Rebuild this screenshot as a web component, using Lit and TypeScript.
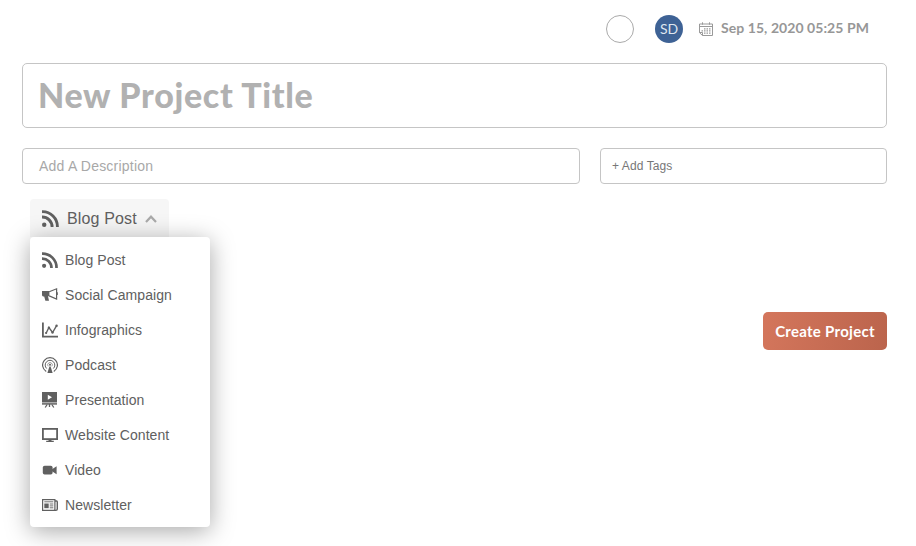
import { LitElement, html, css, svg } from "lit";
import { customElement } from "lit/decorators.js";

const icons: Record<string, unknown> = {
  blog: svg`<g fill="none" stroke="currentColor" stroke-width="2.7"><path d="M0 1.6A14 14 0 0 1 14.5 16"/><path d="M0 6.6A9.3 9.3 0 0 1 9.5 16"/></g><circle cx="2.1" cy="13.8" r="2.1" fill="currentColor"/>`,
  social: svg`<path d="M0 4h7.4v5.2H6l1 4.6H3.4L2.2 9.6H1.2Q0 9.2 0 8z" fill="currentColor"/><path d="M7.2 4.8 14.6 1.8V12L7.2 8.9" fill="none" stroke="currentColor" stroke-width="1.2"/><path d="M14.2 5.3h1.6v2.8h-1.6z" fill="currentColor"/>`,
  info: svg`<path d="M.9.5v14.1H16" fill="none" stroke="currentColor" stroke-width="1.8"/><path d="m4.1 11.2 2.8-5.7 3.7 5 4-6.9" fill="none" stroke="currentColor" stroke-width="1.4"/><g fill="currentColor"><circle cx="4.1" cy="11" r="1.1"/><circle cx="6.9" cy="5.8" r="1.2"/><circle cx="10.5" cy="10.4" r="1.2"/><circle cx="14.6" cy="3.8" r="1.2"/></g>`,
  podcast: svg`<g fill="none" stroke="currentColor"><path d="M4.2 14.4a7.4 7.4 0 1 1 7.6 0" stroke-width="1.2"/><path d="M4.6 11.5a4.8 4.8 0 1 1 6.8 0" stroke-width="1"/><path d="M6.2 9.3a2.3 2.3 0 1 1 3.6 0" stroke-width=".6"/></g><circle cx="8" cy="7.8" r="1" fill="currentColor"/><path d="M7.4 9.6h1.2l2 6.4H5.4z" fill="currentColor"/>`,
  slides: svg`<path fill-rule="evenodd" d="M0 0h15v10.6H0zM5.8 2.7v5L10 5.2z" fill="currentColor"/><path d="M0 11.9h15" fill="none" stroke="currentColor" stroke-width="1.5"/><path d="M7.5 12v3M5.2 12.5l-2 3M9.8 12.5l2 3" fill="none" stroke="currentColor" stroke-width="1.3"/>`,
  web: svg`<rect x=".9" y="1.9" width="14.2" height="10.2" fill="none" stroke="currentColor" stroke-width="1.8"/><path d="M6.5 12.5h3v1.3h2.3v1.2H4.2v-1.2h2.3z" fill="currentColor"/>`,
  video: svg`<rect x=".8" y="3.7" width="9.8" height="8.8" rx="1.8" fill="currentColor"/><path d="m10 7.2 4.6-3v8L10 9.3z" fill="currentColor"/>`,
  news: svg`<path d="M.6 2.6h12.3v10.8H.6z" fill="none" stroke="currentColor" stroke-width="1.2"/><path d="M13 4h1.6q.7 0 .7 1v7q0 1.4-1.4 1.4H12" fill="none" stroke="currentColor" stroke-width="1.4"/><path d="M2.3 6.5h4.4v4.7H2.3z" fill="currentColor"/><path d="M2.3 4.8h9M7.7 7h3.6M7.7 8.9h3.6M7.7 10.8h3.6" stroke="currentColor" stroke-width=".9"/>`,
};

const icon = (name: string, size = 16) =>
  html`<svg width=${size} height=${size} viewBox="0 0 16 16" aria-hidden="true">${icons[name]}</svg>`;

const types = [
  ["blog", "Blog Post"],
  ["social", "Social Campaign"],
  ["info", "Infographics"],
  ["podcast", "Podcast"],
  ["slides", "Presentation"],
  ["web", "Website Content"],
  ["video", "Video"],
  ["news", "Newsletter"],
];

@customElement("app-root")
export class AppRoot extends LitElement {
  static styles = css`
    :host {
      display: block;
      box-sizing: border-box;
      height: 546px;
      overflow: hidden;
      padding: 0 29px 0 22px;
      background: #fff;
      color: #606060;
      font-family: "Liberation Sans", Arial, sans-serif;
    }
    * { box-sizing: border-box; }
    svg { display: block; flex: none; }
    .top {
      display: flex;
      justify-content: flex-end;
      align-items: center;
      height: 63px;
      padding: 0 18px 6px 0;
    }
    .circle {
      width: 28px;
      height: 28px;
      border-radius: 50%;
      border: 1px solid #aaa;
      margin-right: 21px;
    }
    .avatar {
      display: flex;
      align-items: center;
      justify-content: center;
      width: 28px;
      height: 28px;
      border-radius: 50%;
      background: #3e6295;
      color: #dfe6ef;
      font: 400 14px Lato, sans-serif;
      margin-right: 16px;
    }
    .cal { color: #999; margin-right: 7px; }
    .date {
      width: 149px;
      padding-left: 1px;
      font: 700 14px/18px Lato, sans-serif;
      letter-spacing: 0.06px;
      color: #979797;
      white-space: nowrap;
      margin-bottom: 1px;
    }
    .box {
      display: flex;
      align-items: center;
      border: 1px solid #c5c5c5;
      border-radius: 4px;
      white-space: nowrap;
    }
    .title {
      height: 65px;
      padding: 0 0 2px 15px;
      border-radius: 5px;
      font: 900 34px/40px Lato, sans-serif;
      letter-spacing: 0.67px;
      color: #b1b1b1;
    }
    .fields {
      display: grid;
      grid-template-columns: 558px 287px;
      gap: 20px;
      margin-top: 20px;
    }
    .fields .box { height: 36px; }
    .desc { padding-left: 16px; font-size: 14px; letter-spacing: 0.22px; color: #a8a8a8; }
    .tags { padding-left: 11px; font-size: 12px; letter-spacing: 0.08px; color: #777; }
    .lower {
      display: flex;
      justify-content: space-between;
      align-items: flex-start;
      padding: 15px 0 0 8px;
    }
    .picker { width: 180px; }
    .current {
      display: flex;
      align-items: center;
      width: 139px;
      height: 38px;
      padding: 1px 0 0 12px;
      border-radius: 4px 4px 0 0;
      background: #f6f6f6;
      font-size: 16px;
      letter-spacing: 0.15px;
      white-space: nowrap;
    }
    .current .name { margin: 0 8px 0 8px; }
    .menu {
      position: relative;
      margin: 0;
      padding: 5px 0;
      list-style: none;
      border-radius: 4px;
      background: #fff;
      box-shadow: 0 4px 24px rgba(0, 0, 0, 0.35);
    }
    .item {
      display: flex;
      align-items: center;
      gap: 7px;
      height: 35px;
      padding-left: 12px;
      font-size: 14px;
      letter-spacing: 0.07px;
      white-space: nowrap;
    }
    .create {
      width: 124px;
      height: 38px;
      margin-top: 113px;
      padding: 0;
      border: 0;
      border-radius: 5px;
      background: linear-gradient(100deg, #d4765c, #bb644c);
      color: #fff;
      font: 700 15px Lato, sans-serif;
      letter-spacing: 0.28px;
      white-space: nowrap;
    }
  `;

  render() {
    return html`
      <header class="top">
        <span class="circle"></span>
        <span class="avatar">SD</span>
        <svg class="cal" width="14" height="14" viewBox="0 0 14 14" fill="none" stroke="currentColor">
          <path d="M.5 2h13v11.5h-10L.5 10.7zM.5 4.5h13M.5 10.5h3v3M3.5.3v2.4M10.5.3v2.4" />
          <path d="M5 6.8h1.5M7.5 6.8H9M10 6.8h1.5M2.5 8.8H4M5 8.8h1.5M7.5 8.8H9M10 8.8h1.5M5 11.2h1.5M7.5 11.2H9M10 11.2h1.5" stroke-width="1.2" />
        </svg>
        <span class="date">Sep 15, 2020 05:25 PM</span>
      </header>
      <div class="box title">New Project Title</div>
      <div class="fields">
        <div class="box desc">Add A Description</div>
        <div class="box tags">+ Add Tags</div>
      </div>
      <div class="lower">
        <div class="picker">
          <div class="current">
            ${icon("blog", 17)}<span class="name">Blog Post</span>
            <svg width="12" height="8" viewBox="0 0 12 8" fill="none" stroke="#aaa" stroke-width="2.2">
              <path d="m1 7 5-5.3L11 7" />
            </svg>
          </div>
          <ul class="menu">
            ${types.map(([name, label]) => html`<li class="item">${icon(name)}<span>${label}</span></li>`)}
          </ul>
        </div>
        <button class="create">Create Project</button>
      </div>
    `;
  }
}
